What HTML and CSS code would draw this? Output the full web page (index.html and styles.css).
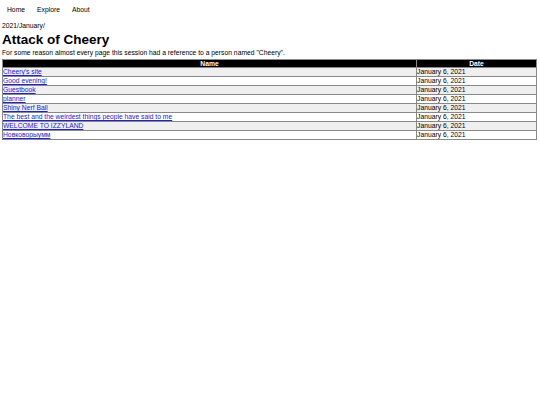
FILE: index.html
```html
<!DOCTYPE html>
<html>
<head>
<meta charset="utf-8">
<link rel="stylesheet" href="styles.css">
</head>
<body>
<nav class="nav">
  <a href="#">Home</a>
  <a href="#">Explore</a>
  <a href="#">About</a>
</nav>
<div class="crumb">2021/January/</div>
<h1 class="title">Attack of Cheery</h1>
<p class="desc">For some reason almost every page this session had a reference to a person named "Cheery".</p>
<table class="list">
  <thead>
    <tr><th>Name</th><th class="date">Date</th></tr>
  </thead>
  <tbody>
    <tr><td><a href="#">Cheery's site</a></td><td>January 6, 2021</td></tr>
    <tr><td><a href="#">Good evening!</a></td><td>January 6, 2021</td></tr>
    <tr><td><a href="#">Guestbook</a></td><td>January 6, 2021</td></tr>
    <tr><td><a href="#">planner</a></td><td>January 6, 2021</td></tr>
    <tr><td><a href="#">Shiny Nerf Ball</a></td><td>January 6, 2021</td></tr>
    <tr><td><a href="#">The best and the weirdest things people have said to me</a></td><td>January 6, 2021</td></tr>
    <tr><td><a href="#">WELCOME TO IZZYLAND</a></td><td>January 6, 2021</td></tr>
    <tr><td><a href="#">Новковорыумм</a></td><td>January 6, 2021</td></tr>
  </tbody>
</table>
</body>
</html>
```

FILE: styles.css
```css
html, body {
  margin: 0;
  padding: 0;
  background: #fff;
}
body {
  font-family: "Liberation Sans", Arial, sans-serif;
  font-size: 6.75px;
  color: #000;
  padding: 0 3px 0 2px;
}
.nav {
  display: flex;
  padding: 5px 0 0 0;
  height: 10px;
}
.nav a {
  color: #000;
  text-decoration: none;
  padding: 0 6px 0 5px;
  line-height: 9px;
  margin-right: 1px;
}
.crumb {
  margin-top: 7px;
  line-height: 8px;
}
.title {
  font-size: 13.5px;
  font-weight: bold;
  margin: 2px 0 0 0;
  line-height: 15px;
}
.desc {
  margin: 2px 0 0 0;
  line-height: 8px;
}
.list {
  width: 100%;
  border-collapse: collapse;
  margin-top: 2px;
  font-size: 6.75px;
}
.list th {
  background: #000;
  color: #fff;
  font-weight: bold;
  border: 1px solid #888;
  line-height: 7px;
  padding: 0;
  text-align: center;
}
.list th.date {
  width: 119px;
}
.list td {
  border: 1px solid #888;
  padding: 0;
  line-height: 8px;
  text-align: left;
}
.list tbody tr:nth-child(odd) {
  background: #efefef;
}
.list a {
  color: #2222cc;
}
```
